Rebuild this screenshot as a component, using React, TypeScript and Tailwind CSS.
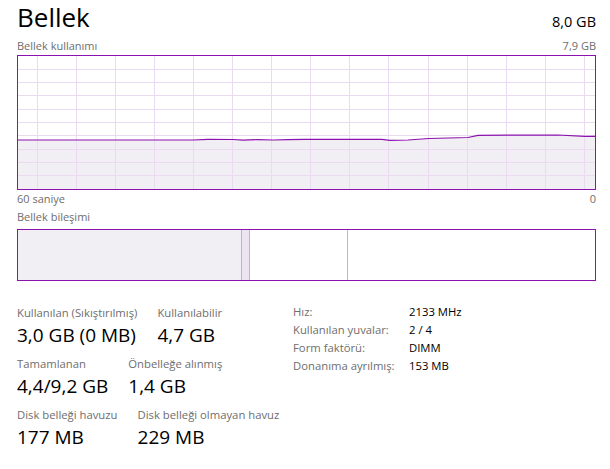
const usage: [number, number][] = [
  [0, 84], [175, 84], [190, 83.3], [215, 83.5], [225, 84.2], [240, 83.6], [255, 84],
  [270, 83.6], [287, 83.3], [364, 83.3], [372, 84.3], [390, 84], [411, 82.5],
  [450, 81.5], [460, 79.3], [540, 79], [567, 80.3], [577, 80.3],
];

function UsageGraph() {
  const w = 577;
  const h = 133;
  const line = usage.map(([x, y]) => `${x},${y}`).join(" ");
  const area = `0,${h} ${line} ${w},${h}`;
  const cols = Array.from({ length: 15 }, (_, i) => 19 + i * 39.1);
  const rows = Array.from({ length: 9 }, (_, i) => 13.3 * (i + 1));
  return (
    <svg width={w} height={h} className="block">
      <polygon points={area} fill="#f2eff4" />
      {rows.map((y) => (
        <line key={"r" + y} x1={0} x2={w} y1={y} y2={y} stroke="#ebdbf0" strokeWidth={1} shapeRendering="crispEdges" />
      ))}
      {cols.map((x) => (
        <line key={"c" + x} x1={x} x2={x} y1={0} y2={h} stroke="#ebdbf0" strokeWidth={1} shapeRendering="crispEdges" />
      ))}
      <polyline points={line} fill="none" stroke="#8b12ae" strokeWidth={1.2} />
    </svg>
  );
}

function Stat({ label, value }: { label: string; value: string }) {
  return (
    <div className="flex flex-col whitespace-nowrap">
      <span className="text-[11.3px] leading-[16px] text-[#6e6e6e]">{label}</span>
      <span className="text-[19px] leading-[28px] text-black">{value}</span>
    </div>
  );
}

export default function App() {
  const info = [
    ["Hız:", "2133 MHz"],
    ["Kullanılan yuvalar:", "2 / 4"],
    ["Form faktörü:", "DIMM"],
    ["Donanıma ayrılmış:", "153 MB"],
  ];

  return (
    <div className="w-[610px] h-[469px] bg-white pl-[17px] pr-[14px] font-['Open_Sans',sans-serif] overflow-hidden">
      <div className="flex justify-between items-baseline h-[34px]">
        <h1 className="text-[26px] leading-[34px] text-black">Bellek</h1>
        <span className="text-[14.5px] text-black">8,0 GB</span>
      </div>

      <div className="flex justify-between text-[11px] leading-[16px] text-[#6e6e6e] mt-[4px]">
        <span>Bellek kullanımı</span>
        <span>7,9 GB</span>
      </div>

      <div className="border border-[#8b12ae] mt-[1px]">
        <UsageGraph />
      </div>

      <div className="flex justify-between text-[11px] leading-[16px] text-[#6e6e6e] mt-[1px]">
        <span>60 saniye</span>
        <span>0</span>
      </div>

      <div className="text-[11px] leading-[16px] text-[#6e6e6e] mt-[2px]">Bellek bileşimi</div>

      <div className="flex h-[52px] border border-[#8b12ae] mt-[4px]">
        <div className="w-[224px] bg-[#f2eff4] border-r border-[#cfa9dc]" />
        <div className="w-[8px] bg-[#ece4f0] border-r border-[#cfa9dc]" />
        <div className="w-[98px] bg-white border-r border-[#cfa9dc]" />
        <div className="flex-1 bg-white" />
      </div>

      <div className="flex mt-[21px]">
        <div className="w-[276px] flex flex-col gap-[7px] pt-[3px]">
          <div className="flex gap-[20px]">
            <Stat label="Kullanılan (Sıkıştırılmış)" value="3,0 GB (0 MB)" />
            <Stat label="Kullanılabilir" value="4,7 GB" />
          </div>
          <div className="flex gap-[20px]">
            <Stat label="Tamamlanan" value="4,4/9,2 GB" />
            <Stat label="Önbelleğe alınmış" value="1,4 GB" />
          </div>
          <div className="flex gap-[20px]">
            <Stat label="Disk belleği havuzu" value="177 MB" />
            <Stat label="Disk belleği olmayan havuz" value="229 MB" />
          </div>
        </div>

        <div className="flex flex-col text-[11.3px] leading-[18px] whitespace-nowrap pt-[1px]">
          {info.map(([k, v]) => (
            <div key={k} className="flex">
              <span className="w-[116px] text-[#6e6e6e]">{k}</span>
              <span className="text-black">{v}</span>
            </div>
          ))}
        </div>
      </div>
    </div>
  );
}
